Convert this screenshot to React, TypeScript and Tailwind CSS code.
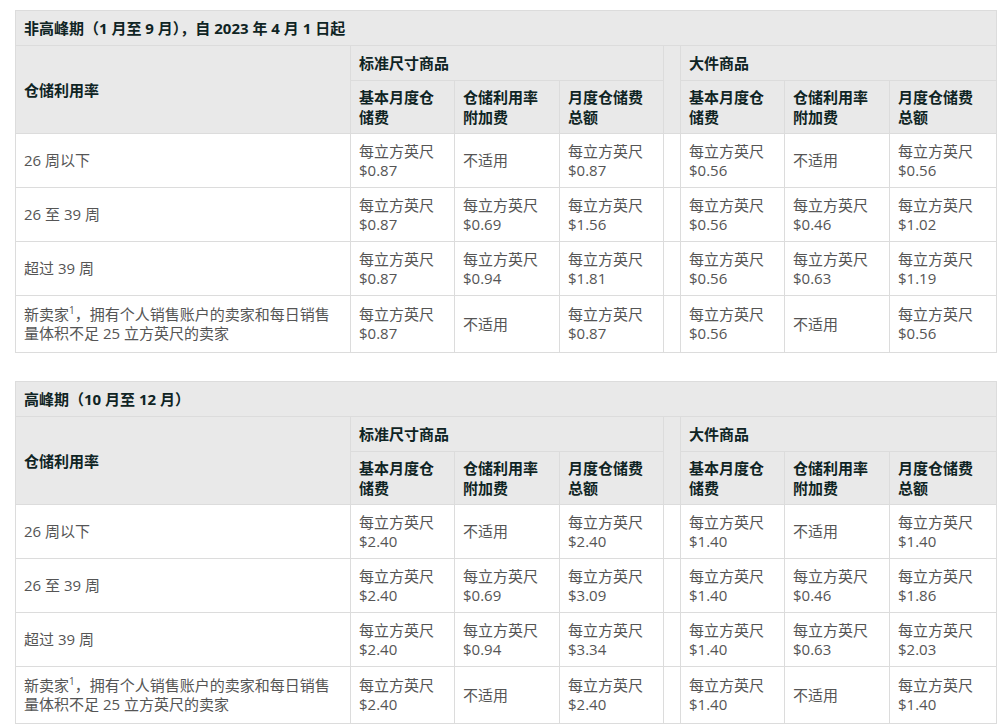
const F = { fontFamily: '"Open Sans","Noto Sans CJK SC",sans-serif' };

type Row = { label: React.ReactNode; v: string[] };

const cell = (v: string) =>
  v === "不适用" ? <span>不适用</span> : (<><div>每立方英尺</div><div>{v}</div></>);

const heads: [string, string][] = [
  ["基本月度仓", "储费"], ["仓储利用率", "附加费"], ["月度仓储费", "总额"],
  ["基本月度仓", "储费"], ["仓储利用率", "附加费"], ["月度仓储费", "总额"],
];

function Table({ title, rows }: { title: string; rows: Row[] }) {
  const th = "border border-[#dcdcdc] bg-[#e9e9e9] text-left align-middle px-2 font-bold text-[#0f2424] leading-[20px]";
  const td = "border border-[#dcdcdc] bg-white text-left align-middle px-2 text-[#555] leading-[19px]";
  return (
    <table className="border-collapse table-fixed w-[981px] text-[15px]">
      <colgroup>
        <col className="w-[335px]" /><col className="w-[104px]" /><col className="w-[105px]" /><col className="w-[104px]" />
        <col className="w-[17px]" /><col className="w-[104px]" /><col className="w-[105px]" /><col className="w-[107px]" />
      </colgroup>
      <tbody>
        <tr className="h-[35px]"><th colSpan={8} className={th}>{title}</th></tr>
        <tr className="h-[35px]">
          <th rowSpan={2} className={th}>仓储利用率</th>
          <th colSpan={3} className={th}>标准尺寸商品</th>
          <th rowSpan={2} className={th}></th>
          <th colSpan={3} className={th}>大件商品</th>
        </tr>
        <tr className="h-[53px]">
          {heads.map((h, i) => (
            <th key={i} className={th}>{h[0]}<br />{h[1]}</th>
          ))}
        </tr>
        {rows.map((r, i) => (
          <tr key={i} className={i === 3 ? "h-[57px]" : "h-[54px]"}>
            <td className={td}>{r.label}</td>
            {r.v.slice(0, 3).map((v, j) => <td key={j} className={td}>{cell(v)}</td>)}
            <td className={td}></td>
            {r.v.slice(3).map((v, j) => <td key={j} className={td}>{cell(v)}</td>)}
          </tr>
        ))}
      </tbody>
    </table>
  );
}

const newSeller = (<>新卖家<span className="relative -top-[6px] text-[10px] leading-none">1</span>，拥有个人销售账户的卖家和每日销售量体积不足 25 立方英尺的卖家</>);

export default function App() {
  const r1: Row[] = [
    { label: "26 周以下", v: ["$0.87", "不适用", "$0.87", "$0.56", "不适用", "$0.56"] },
    { label: "26 至 39 周", v: ["$0.87", "$0.69", "$1.56", "$0.56", "$0.46", "$1.02"] },
    { label: "超过 39 周", v: ["$0.87", "$0.94", "$1.81", "$0.56", "$0.63", "$1.19"] },
    { label: newSeller, v: ["$0.87", "不适用", "$0.87", "$0.56", "不适用", "$0.56"] },
  ];
  const r2: Row[] = [
    { label: "26 周以下", v: ["$2.40", "不适用", "$2.40", "$1.40", "不适用", "$1.40"] },
    { label: "26 至 39 周", v: ["$2.40", "$0.69", "$3.09", "$1.40", "$0.46", "$1.86"] },
    { label: "超过 39 周", v: ["$2.40", "$0.94", "$3.34", "$1.40", "$0.63", "$2.03"] },
    { label: newSeller, v: ["$2.40", "不适用", "$2.40", "$1.40", "不适用", "$1.40"] },
  ];
  return (
    <div style={F} className="w-[1000px] h-[728px] overflow-hidden bg-white pt-[10px] pl-[15px] flex flex-col gap-[28px]">
      <Table title="非高峰期（1 月至 9 月），自 2023 年 4 月 1 日起" rows={r1} />
      <Table title="高峰期（10 月至 12 月）" rows={r2} />
    </div>
  );
}
